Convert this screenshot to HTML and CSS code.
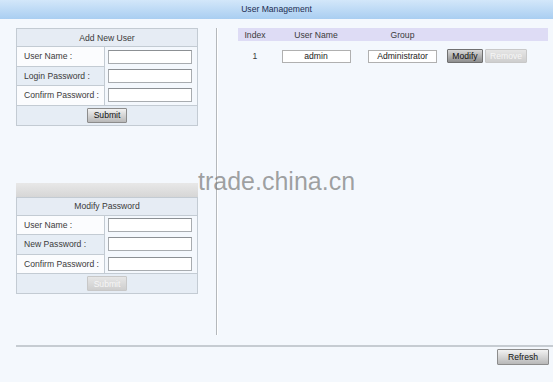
FILE: index.html
```html
<!DOCTYPE html>
<html lang="en">
<head>
    <meta charset="UTF-8">
    <title>User Management</title>
    <link rel="stylesheet" href="styles.css">
</head>
<body>
    <div class="title">User Management</div>
    <div class="main">
        <div class="left">
            <table class="form">
                <tr><th colspan="2">Add New User</th></tr>
                <tr><td class="lbl">User Name :</td><td class="fld"><input type="text"></td></tr>
                <tr class="alt"><td class="lbl">Login Password :</td><td class="fld"><input type="password"></td></tr>
                <tr><td class="lbl">Confirm Password :</td><td class="fld"><input type="password"></td></tr>
                <tr class="act"><td colspan="2"><button class="btn">Submit</button></td></tr>
            </table>

            <div class="bar"></div>
            <table class="form">
                <tr><th colspan="2">Modify Password</th></tr>
                <tr><td class="lbl">User Name :</td><td class="fld"><input type="text"></td></tr>
                <tr class="alt"><td class="lbl">New Password :</td><td class="fld"><input type="password"></td></tr>
                <tr><td class="lbl">Confirm Password :</td><td class="fld"><input type="password"></td></tr>
                <tr class="act"><td colspan="2"><button class="btn off" disabled>Submit</button></td></tr>
            </table>
        </div>
        <div class="sep"></div>
        <div class="right">
            <div class="users-head">
                <span class="c-idx">Index</span>
                <span class="c-name">User Name</span>
                <span class="c-grp">Group</span>
            </div>
            <div class="users-row">
                <span class="c-idx">1</span>
                <span class="c-name"><input class="ro" type="text" value="admin" readonly></span>
                <span class="c-grp"><input class="ro" type="text" value="Administrator" readonly></span>
                <span class="c-ops">
                    <button class="btn dark">Modify</button>
                    <button class="btn off" disabled>Remove</button>
                </span>
            </div>
        </div>
    </div>
    <div class="foot">
        <button class="btn refresh">Refresh</button>
    </div>
    <div class="mark">trade.china.cn</div>
</body>
</html>
```

FILE: styles.css
```css
*{margin:0; padding:0; box-sizing:border-box;}
html,body{height:100%;}
body{
    background-color:#f4f8fd;
    font-family:"Liberation Sans", Arial, sans-serif;
    font-size:8.6px;
    color:#3a3a3a;
    position:relative;
}

.title{
    height:19px; line-height:19px;
    text-align:center;
    color:#1d2d52;
    background:linear-gradient(#d3e7fa, #a9cef1);
}

.main{
    display:flex;
    padding:9px 5px 0 16px;
    height:326px;
}
.left{width:182px;}
.sep{
    width:1px; height:307px;
    margin-left:18px;
    background-color:#b4b8bc;
    box-shadow:1px 0 0 #fff;
}
.right{flex:1; margin-left:21px;}

/* forms */
.form{
    width:182px;
    border-collapse:collapse;
    border:1px solid #c3cbd3;
}
.form th{
    height:18px;
    font-weight:normal;
    background-color:#e6ecf4;
    border-bottom:1px solid #c3cbd3;
}
.form td{height:19.5px;}
.form .lbl{
    width:88px;
    padding-left:7px;
    background-color:#fbfcfe;
    border:1px solid #c3cbd3;
}
.form .alt .lbl{background-color:#e6edf5;}
.form .fld{padding-left:3px; background-color:#f4f8fd;}
.form .act td{
    height:20px;
    text-align:center;
    background-color:#e6edf5;
    border-top:1px solid #c3cbd3;
}
input{
    display:block;
    width:84px; height:14px;
    border:1px solid #a8acb0;
    border-top-color:#8c9094;
    background-color:#fff;
    font:inherit;
}
.bar{
    height:14px;
    margin-top:57px;
    background:linear-gradient(#e8e8e8, #d6d6d6);
}

/* buttons */
.btn{
    width:40px; height:15px;
    font:inherit;
    color:#111;
    border:1px solid #8c8c8c;
    border-radius:1px;
    background:linear-gradient(#f2f2f2, #b8b8b8);
}
.btn.dark{
    width:36px; height:14px;
    background:linear-gradient(#d8d8d8, #8e8e8e);
    border-color:#707070;
}
.btn.off{
    color:#f6f6f6;
    border-color:#c8c8c8;
    background:linear-gradient(#e6e6e6, #cecece);
}
.c-ops .btn.off{width:42px; height:14px;}

/* user list */
.users-head, .users-row{display:flex; align-items:center;}
.users-head{
    height:13px;
    background-color:#dedcf5;
}
.users-row{height:30px;}
.c-idx{width:34px; text-align:center;}
.c-name{width:88px; display:flex; justify-content:center;}
.c-grp{width:85px; display:flex; justify-content:center;}
.c-ops{display:flex; gap:2px; padding-left:2px;}
.ro{
    width:69px; height:13px;
    text-align:center;
    color:#222;
    border-color:#b0b0b0;
}

.foot{
    position:absolute; left:16px; right:0; top:345px;
    border-top:2px solid #c6ccd2;
    display:flex;
    justify-content:flex-end;
    padding:2px 4px 0 0;
}
.refresh{width:52px; height:16px;}

/* watermark over the page */
.mark{
    position:absolute; left:198px; top:167px;
    font-size:25px;
    color:rgba(120,120,120,0.7);
    pointer-events:none;
}
```
